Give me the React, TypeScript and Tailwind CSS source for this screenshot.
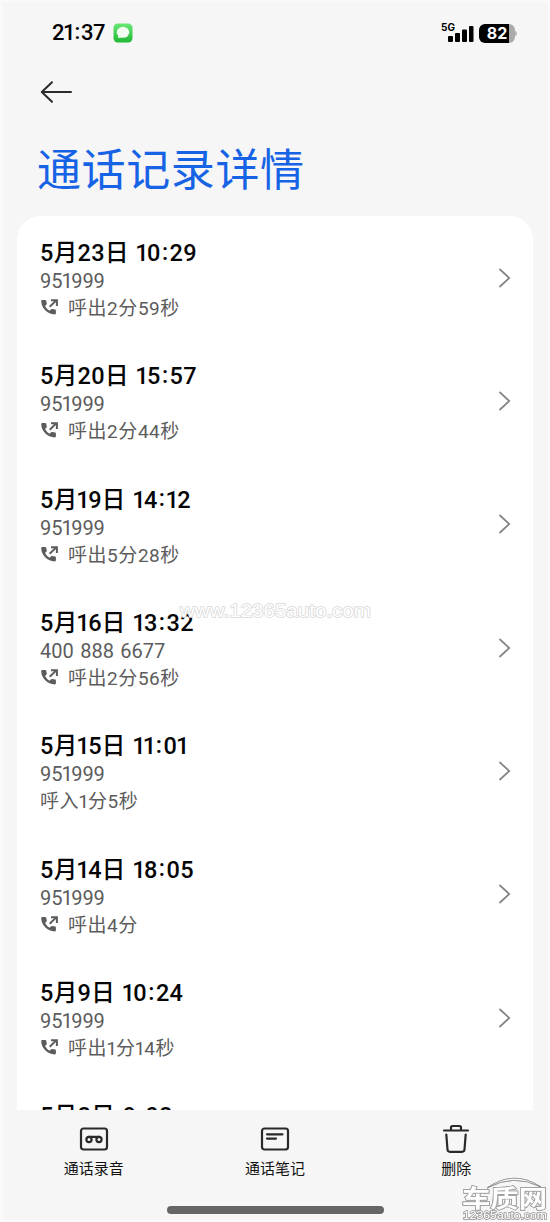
import React from "react";

type CallRecord = { time: string; number: string; duration: string; outgoing: boolean };

const records: CallRecord[] = [
  { time: "5月23日 10:29", number: "951999", duration: "呼出2分59秒", outgoing: true },
  { time: "5月20日 15:57", number: "951999", duration: "呼出2分44秒", outgoing: true },
  { time: "5月19日 14:12", number: "951999", duration: "呼出5分28秒", outgoing: true },
  { time: "5月16日 13:32", number: "400 888 6677", duration: "呼出2分56秒", outgoing: true },
  { time: "5月15日 11:01", number: "951999", duration: "呼入1分5秒", outgoing: false },
  { time: "5月14日 18:05", number: "951999", duration: "呼出4分", outgoing: true },
  { time: "5月9日 10:24", number: "951999", duration: "呼出1分14秒", outgoing: true },
  { time: "5月8日 9:08", number: "951999", duration: "呼出2分", outgoing: true },
];

/* Sets the figure one and the colon on proportional widths. */
function Figures({ children }: { children: string }) {
  return (
    <>
      {children.split(/([1:])/).map((part, i) => {
        if (part === "1") return <span key={i} className="-ml-[0.05em] -mr-[0.08em]">1</span>;
        if (part === ":") return <span key={i} className="relative -top-[0.06em] mx-[0.05em]">:</span>;
        return part;
      })}
    </>
  );
}

function OutgoingIcon() {
  return (
    <svg className="-mt-[3px] mr-[9px] h-[18px] w-[19px] shrink-0" viewBox="0 0 19 18" fill="none">
      <path
        d="M2.300 2H5.200Q6 2 6.200 2.800L6.800 5.600Q6.900 6.200 6.400 6.700L5 8.100Q6.500 11 9.600 12.700L11.100 11.200Q11.600 10.800 12.200 10.900L15.200 11.600Q15.900 11.800 15.900 12.600V15.300Q15.900 16.400 14.800 16.400Q9 16 5.200 12.300Q1.500 8.500 1.200 3.200Q1.200 2 2.300 2Z"
        fill="#5c5c5c"
      />
      <path d="M9.700 8.700 16.300 2.400M11 2.300h5.900v5.700" stroke="#5c5c5c" strokeWidth="2" />
    </svg>
  );
}

function CallRow({ record }: { record: CallRecord }) {
  return (
    <li className="flex h-[123.33px] shrink-0 items-center justify-between pl-[23px] pr-[22px]">
      <div className="whitespace-nowrap pt-[4px]">
        <div className="h-[31px] text-[23.5px] font-medium leading-[32px] tracking-[0.33px] [word-spacing:1.5px] text-[#050505]">
          <Figures>{record.time}</Figures>
        </div>
        <div className="h-[27px] text-[20px] leading-[26px] [word-spacing:1.5px] text-[#5c5c5c]">
          <Figures>{record.number}</Figures>
        </div>
        <div className="flex h-[27px] items-center text-[19px] leading-[27px] tracking-[0.55px] text-[#5c5c5c]">
          {record.outgoing && <OutgoingIcon />}
          <span><Figures>{record.duration}</Figures></span>
        </div>
      </div>
      <svg className="h-[20px] w-[13px]" viewBox="0 0 13 20" fill="none">
        <path d="m1.500 1 9.800 9-9.800 9" stroke="#858585" strokeWidth="1.700" />
      </svg>
    </li>
  );
}

function ToolButton({ label, children }: { label: string; children: React.ReactNode }) {
  return (
    <button className="flex flex-1 flex-col items-center">
      <svg className="h-[32px] w-[32px]" viewBox="0 0 32 32" fill="none" stroke="#292929" strokeWidth="2.200" strokeLinecap="round" strokeLinejoin="round">
        {children}
      </svg>
      <span className="mt-[3px] text-[15px] leading-[22px] text-[#111]">{label}</span>
    </button>
  );
}

export default function App() {
  return (
    <div className="relative flex h-[1222px] w-[550px] flex-col overflow-hidden border-b-2 border-l-[3px] border-r-[2px] border-t-[2px] border-[#fafafa] bg-[#f6f6f6] font-[Roboto,'Noto_Sans_CJK_SC',sans-serif]">
      <header className="flex h-[214px] shrink-0 flex-col">
        <div className="flex h-[62px] items-center justify-between pl-[48px] pr-[31px]">
          <div className="flex items-center">
            <span className="w-[62px] whitespace-nowrap pl-px text-[22px] font-medium leading-[30px] tracking-[-0.4px] text-black">
              <Figures>21:37</Figures>
            </span>
            <svg className="h-[20px] w-[20px]" viewBox="0 0 20 20">
              <defs>
                <linearGradient id="message" x1="0" y1="0" x2="0" y2="1">
                  <stop stopColor="#68e875" />
                  <stop offset="1" stopColor="#20b735" />
                </linearGradient>
              </defs>
              <rect x=".5" y=".5" width="19" height="19" rx="4.500" fill="url(#message)" />
              <ellipse cx="10" cy="9.300" rx="6.300" ry="5.500" fill="#f2fcf1" />
              <path d="m5.500 12-.3 3.300 4-1.200Z" fill="#f2fcf1" />
            </svg>
          </div>
          <div className="flex items-center gap-[5px]">
            <div className="flex h-[20px] items-end">
              <span className="-mr-[7px] self-start whitespace-nowrap font-[Inter,sans-serif] text-[10px] font-bold leading-[9px]">5G</span>
              <svg className="h-[18px] w-[26px]" viewBox="0 0 26 18">
                <rect x="0" y="11" width="5" height="6" rx="1" />
                <rect x="7" y="8" width="5" height="9" rx="1" />
                <rect x="14" y="4.500" width="5" height="12.500" rx="1" />
                <rect x="21" y="1" width="4.500" height="16" rx="1" />
              </svg>
            </div>
            <div className="flex items-center">
              <div className="flex h-[19px] w-[36px] items-center justify-center overflow-hidden rounded-[6px] bg-gradient-to-r from-black from-82% to-[#aaa] to-82% font-[Inter,sans-serif] text-[16px] font-bold leading-[19px] text-white">
                82
              </div>
              <span className="h-[5px] w-[2px] rounded-r bg-[#bbb]" />
            </div>
          </div>
        </div>
        <div className="pl-[37px] pt-[16px]">
          <svg className="h-[24px] w-[34px]" viewBox="0 0 34 24" fill="none" stroke="#2b2b2b" strokeWidth="2" strokeLinecap="round" strokeLinejoin="round">
            <path d="M12 2.200 1.800 12 12 21.800M2 12h29" />
          </svg>
        </div>
        <h1 className="pl-[34px] pt-[34px] text-[44px] font-normal leading-[66px] tracking-[0.6px] text-[#1763e5]">通话记录详情</h1>
      </header>

      <ul className="ml-[14px] mr-[15px] flex h-[894px] shrink-0 flex-col overflow-hidden rounded-t-[24px] bg-white">
        {records.map((record) => (
          <CallRow key={record.time} record={record} />
        ))}
      </ul>

      <nav className="mr-px flex h-[96px] shrink-0 pt-[13px]">
        <ToolButton label="通话录音">
          <rect x="3" y="5.500" width="26" height="21" rx="2.500" />
          <circle cx="11" cy="16.500" r="2.600" />
          <circle cx="21" cy="16.500" r="2.600" />
          <path d="M11 13.900h10" />
        </ToolButton>
        <ToolButton label="通话笔记">
          <rect x="3" y="5.500" width="26" height="21" rx="2.500" />
          <path d="M8 11.300h15.500M8 15.600h9" />
        </ToolButton>
        <ToolButton label="删除">
          <path d="M4 7.500h24M11 7V4.500Q11 3 12.500 3h7Q21 3 21 4.500V7M6.300 11.500 7.500 26.500Q7.700 28.800 10 28.800h12q2.300 0 2.500-2.300L25.700 11.500" />
        </ToolButton>
      </nav>
      <div className="ml-[164px] h-[8px] w-[217px] shrink-0 rounded-full bg-[#666]" />

      <svg className="pointer-events-none absolute left-[172px] top-[594px] h-[28px] w-[204px]" viewBox="0 0 204 28">
        <text x="5" y="21" textLength="191" lengthAdjust="spacingAndGlyphs" fontSize="18" fontFamily="Liberation Sans" fill="#fff" stroke="#d6d6d6" strokeWidth="1.400" strokeLinejoin="round" paintOrder="stroke">
          www.12365auto.com
        </text>
      </svg>

      <svg className="pointer-events-none absolute left-[457px] top-[1171px] h-[50px] w-[90px]" viewBox="460 1173 90 50">
        <g style={{ filter: "drop-shadow(.6px .6px .5px #666)" }}>
          <path d="M487 1187Q514 1168 541 1186Q514 1172 487 1187Z" transform="translate(0 1)" fill="#fff" stroke="#888" strokeWidth=".6" />
          <text x="462" y="1207" textLength="85" lengthAdjust="spacingAndGlyphs" fontSize="24" fontWeight="700" fontFamily="Noto Sans CJK SC" fill="#fff" stroke="#aaa" strokeWidth="1.400" paintOrder="stroke">车质网</text>
          <text x="463" y="1219" textLength="84" lengthAdjust="spacingAndGlyphs" fontSize="11.500" fontFamily="Liberation Sans" fill="#fff" stroke="#aaa" strokeWidth="1.200" paintOrder="stroke">12365auto.com</text>
        </g>
      </svg>
    </div>
  );
}
